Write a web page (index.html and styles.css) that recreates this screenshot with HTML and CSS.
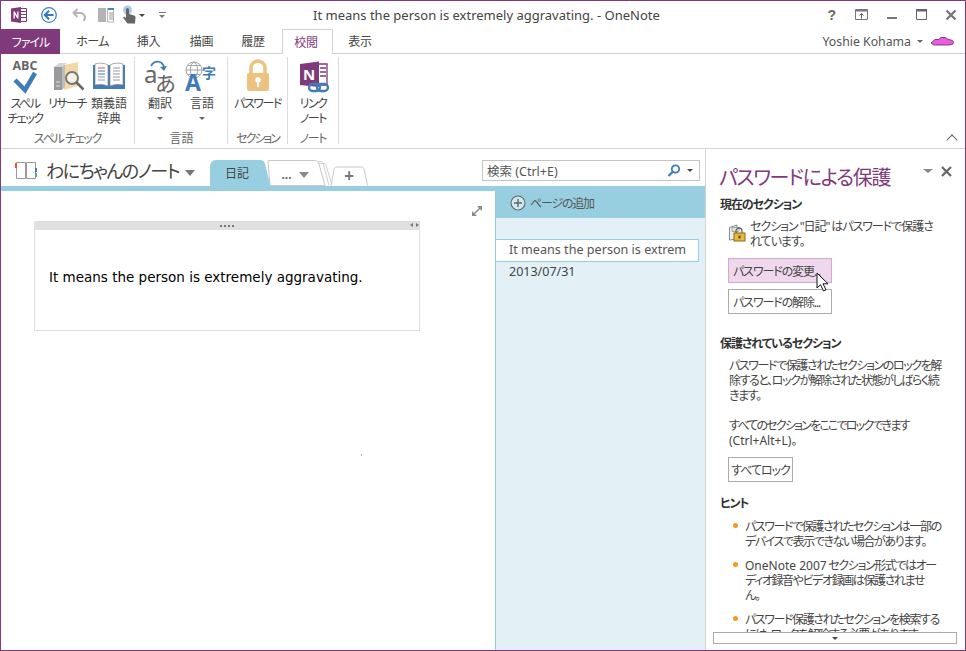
FILE: index.html
```html
<!DOCTYPE html>
<html lang="ja">
<head>
<meta charset="utf-8">
<title>OneNote</title>
<link rel="stylesheet" href="styles.css">
</head>
<body>
<div class="window">
  <header class="titlebar">
    <div class="qat">
      <svg class="qi" width="18" height="18" viewBox="0 0 18 18"><path d="M9 2.500h7.500v13H9z" fill="#fff" stroke="#80397b"/><path d="M11 5.500h5M11 8.500h5M11 11.500h5" stroke="#80397b"/><path d="M1 2.500 11 1v16L1 15.500z" fill="#80397b"/><path d="M3.500 12.500v-7h1.300l2.400 4.300V5.500h1.300v7H7.200L4.800 8.200v4.300z" fill="#fff"/></svg>
      <svg class="qi back" width="18" height="18" viewBox="0 0 18 18"><circle cx="9" cy="9" r="7.300" fill="#fff" stroke="#3f86c6" stroke-width="1.300"/><path d="M9 4.800 4.800 9 9 13.200M5 9h8.500" fill="none" stroke="#2f79c0" stroke-width="2"/></svg>
      <svg class="qi undo" width="18" height="18" viewBox="0 0 18 18"><path d="M6.500 3 2.500 7l4 4" fill="none" stroke="#b5b5b5" stroke-width="2"/><path d="M3 7h6.500a4.500 4.500 0 0 1 3 7.800" fill="none" stroke="#b5b5b5" stroke-width="2"/></svg>
      <svg class="qi read" width="18" height="16" viewBox="0 0 18 16"><path d="M1 1h8v14H1z" fill="#b3b3b3"/><path d="M10.500 1.500h6v13.500h-6z" fill="#fff" stroke="#b3b3b3"/><path d="M11 1h6v2h-6z" fill="#3f86c6"/><path d="M12 6h4M12 8h4M12 10h4M12 12h4" stroke="#999"/></svg>
      <svg class="qi touch" width="18" height="20" viewBox="0 0 18 20"><circle cx="6.500" cy="5" r="4.500" fill="#a9cdea"/><path d="M5 4.500a1.500 1.500 0 0 1 3 0V9l5 1.500c1 .4 1.500 1 1.500 2l-.5 6H6.500L2 12.500l1-1 2 1.500z" fill="#666"/></svg>
      <span class="tri q1"></span>
      <span class="cust"></span>
    </div>
    <div class="doc-title">It means the person is extremely aggravating. - OneNote</div>
    <div class="winbtns">
      <span class="help">?</span>
      <svg width="14" height="12" viewBox="0 0 14 12"><path d="M.5.500h12v10H.500z" fill="none" stroke="#777"/><path d="M1 1h11v1.500H1z" fill="#777"/><path d="M6.500 9.500V5M4.500 6.500l2-2 2 2" fill="none" stroke="#555"/></svg>
      <svg width="12" height="12" viewBox="0 0 12 12"><path d="M1 8h10v2H1z" fill="#777"/></svg>
      <svg width="12" height="12" viewBox="0 0 12 12"><path d="M.5.500h10v10H.500z" fill="none" stroke="#666"/><path d="M0 0h11v2.500H0z" fill="#666"/></svg>
      <svg width="12" height="12" viewBox="0 0 12 12"><path d="M1.500 1.500l9 9M10.500 1.500l-9 9" stroke="#777" stroke-width="2.300"/></svg>
    </div>
  </header>

  <nav class="tabs">
    <a class="tab file">ファイル</a>
    <a class="tab t-home">ホーム</a>
    <a class="tab t-ins">挿入</a>
    <a class="tab t-draw">描画</a>
    <a class="tab t-hist">履歴</a>
    <a class="tab active">校閲</a>
    <a class="tab t-view">表示</a>
    <div class="account">
      <span>Yoshie Kohama</span>
      <span class="tri small"></span>
      <svg width="23" height="10" viewBox="0 0 23 10"><path d="M0 7 4 3.500h4L9.500 1.500h5L17 3.500c3 .2 5.500 1 5.500 3S20 9 17 9H3z" fill="#ee5be3" stroke="#5a2a58" stroke-width=".8"/></svg>
    </div>
  </nav>

  <section class="ribbon">
    <div class="group g1">
      <div class="cmds">
        <div class="cmd">
          <svg class="ic" width="40" height="38" viewBox="0 0 40 38"><text x="20" y="13" class="abc" text-anchor="middle">ABC</text><path d="M10 23l10 10 10-17" fill="none" stroke="#3f7cb8" stroke-width="4.500"/></svg>
          <span>スペル<br>チェック</span>
        </div>
        <div class="cmd">
          <svg class="ic" width="40" height="38" viewBox="0 0 40 38"><path d="M17 8 31 5v24l-14 4z" fill="#f3d9a8"/><path d="M7 10h8v23H7z" fill="#9a9a9a"/><path d="M15 10l3-3v23l-3 3z" fill="#bdbdbd"/><path d="M7 10l5-4h8l-5 4z" fill="#d5d5d5"/><path d="M9 25h4M9 29h4" stroke="#e0e0e0"/><circle cx="25" cy="21" r="6" fill="#f6f1e6" stroke="#777" stroke-width="2"/><path d="M29.500 25.500l7 7" stroke="#666" stroke-width="2.500"/></svg>
          <span>リサーチ</span>
        </div>
        <div class="cmd">
          <svg class="ic" width="40" height="38" viewBox="0 0 40 38"><path d="M4 8h32v24H4z" fill="#3f7cb8"/><path d="M6 7c4-1.500 10-1 13 1v21c-3-1.500-9-2-13-1zM34 7c-4-1.500-10-1-13 1v21c3-1.500 9-2 13-1z" fill="#fff" stroke="#888" stroke-width=".7"/><path d="M9 11h7" stroke="#d9583b"/><path d="M9 14h7M9 17h7" stroke="#3f7cb8"/><path d="M9 20h7M9 23h7M24 11h7M24 14h7M24 17h7M24 20h7M24 23h7" stroke="#999"/></svg>
          <span class="kj">類義語<br>辞典</span>
        </div>
      </div>
      <div class="glabel">スペル チェック</div>
    </div>
    <div class="group g2">
      <div class="cmds">
        <div class="cmd">
          <svg class="ic" width="40" height="38" viewBox="0 0 40 38"><text x="4" y="26" class="glyph-a">a</text><text x="15" y="34" class="glyph-j">あ</text><path d="M11 9c3-6 11-6 13 1" fill="none" stroke="#3f7cb8" stroke-width="1.800"/><path d="M20 10l4 4 3-5z" fill="#3f7cb8"/></svg>
          <span class="kj">翻訳</span>
          <i class="tri cmdtri"></i>
        </div>
        <div class="cmd">
          <svg class="ic" width="40" height="38" viewBox="0 0 40 38"><circle cx="12" cy="13" r="8" fill="none" stroke="#a5a5a5"/><ellipse cx="12" cy="13" rx="3.500" ry="8" fill="none" stroke="#a5a5a5"/><path d="M4 13h16M5.500 8.500h13M5.500 17.500h13" stroke="#a5a5a5"/><text x="3" y="34" class="glyph-A">A</text><text x="20" y="21" class="glyph-k">字</text></svg>
          <span class="kj">言語</span>
          <i class="tri cmdtri"></i>
        </div>
      </div>
      <div class="glabel">言語</div>
    </div>
    <div class="group g3">
      <div class="cmds">
        <div class="cmd wide">
          <svg class="ic" width="40" height="38" viewBox="0 0 40 38"><path d="M13 17v-6a7 7 0 0 1 14 0v6" fill="none" stroke="#ecc27f" stroke-width="3.500"/><rect x="9" y="16" width="22" height="18" rx="2" fill="#ecc27f"/><circle cx="20" cy="23" r="2.800" fill="#fff"/><path d="M19 24h2v6h-2z" fill="#fff"/></svg>
          <span>パスワード</span>
        </div>
      </div>
      <div class="glabel">セクション</div>
    </div>
    <div class="group g4">
      <div class="cmds">
        <div class="cmd wide">
          <svg class="ic" width="40" height="38" viewBox="0 0 40 38"><path d="M20 7h14v21H20z" fill="#fff" stroke="#80397b" stroke-width="1.300"/><path d="M27 11h6M27 15h6M27 19h6" stroke="#80397b" stroke-width="1.300"/><path d="M7 7l19-2.500V30L7 28z" fill="#80397b"/><text x="10" y="23" class="glyph-n">N</text><rect x="16" y="27" width="11" height="7" rx="3.500" fill="none" stroke="#3f7cb8" stroke-width="2.300"/><rect x="24" y="27" width="11" height="7" rx="3.500" fill="none" stroke="#3f7cb8" stroke-width="2.300"/></svg>
          <span>リンク<br>ノート</span>
        </div>
      </div>
      <div class="glabel">ノート</div>
    </div>
    <span class="collapse"></span>
  </section>

  <div class="workspace">
    <div class="content">
      <div class="nbbar">
        <svg class="book" width="24" height="20" viewBox="0 0 24 20"><path d="M2.500 1.500h9v16h-9zM12.500 1.500h9v16h-9z" fill="#fff" stroke="#999"/><path d="M1 2h2v5H1z" fill="#e2572f"/><path d="M21 7h2v4h-2z" fill="#3f7cb8"/><path d="M21 12h2v4h-2z" fill="#5aa58f"/></svg>
        <span class="nbname">わにちゃんのノート</span>
        <span class="tri big"></span>
        <div class="strip">
          <svg class="stripbg" width="170" height="27" viewBox="0 0 170 27"><path d="M119 26.500 113 4c-.500-1-1-1.500-2-1.500h-8" fill="none" stroke="#d0d0d0"/><path d="M122 26.500 116 6c-.500-1-1-1.500-2-1.500h-6" fill="none" stroke="#d0d0d0"/><path d="M60 26.500h55L109 5c-.500-1.500-1.500-3.500-3.500-3.500H58z" fill="#fff" stroke="#c8c8c8"/><path d="M121 26.500l3-16c.3-1.300 1.300-2.500 2.500-2.500h25c1.500 0 2.300 1 2.600 2.500l3.400 16" fill="#fff" stroke="#c8c8c8"/><path d="M0 27V8c0-4 2-7 6-7h44c3 0 4.500 1.500 5 4l5.500 22z" fill="#98cfe0"/></svg>
          <span class="stab s-act">日記</span>
          <span class="stab s-more">...<i class="tri mid"></i></span>
          <span class="stab s-add">+</span>
        </div>
        <div class="search">
          <span>検索 (Ctrl+E)</span>
          <svg width="14" height="14" viewBox="0 0 14 14"><circle cx="8.500" cy="5" r="3.700" fill="none" stroke="#3f7cb8" stroke-width="1.800"/><path d="M6 7.500 1.500 12" stroke="#3f7cb8" stroke-width="2.300"/></svg>
          <i class="tri small dark"></i>
        </div>
      </div>
      <div class="body-row">
        <main class="page">
          <svg class="expand" width="12" height="12" viewBox="0 0 12 12"><path d="M2.500 9.500l7-7" stroke="#8a8a8a" stroke-width="1.500"/><path d="M6 1h5v5zM1 6v5h5z" fill="#8a8a8a"/></svg>
          <article class="note">
            <div class="note-head">
              <span class="grip"></span>
              <span class="arrows"><i class="al"></i><i class="ar"></i></span>
            </div>
            <p>It means the person is extremely aggravating.</p>
          </article>
          <span class="speck"></span>
        </main>
        <aside class="pages">
          <div class="addpage">
            <svg width="16" height="16" viewBox="0 0 16 16"><circle cx="8" cy="8" r="7" fill="#cfe7ef" stroke="#666" stroke-width="1.100"/><path d="M8 4v8M4 8h8" stroke="#666" stroke-width="1.400"/></svg>
            <span>ページの追加</span>
          </div>
          <div class="pageitem">It means the person is extrem</div>
          <div class="pagedate">2013/07/31</div>
        </aside>
      </div>
    </div>

    <aside class="pane">
      <div class="pane-head">
        <h1>パスワードによる保護</h1>
        <span class="tri mid"></span>
        <svg width="11" height="11" viewBox="0 0 11 11"><path d="M1 1l9 9M10 1l-9 9" stroke="#666" stroke-width="2.200"/></svg>
      </div>
      <h2>現在のセクション</h2>
      <div class="locked">
        <svg width="18" height="18" viewBox="0 0 18 18"><path d="M1.500 3.500 9 1v14l-7.500 1z" fill="#f3efe2" stroke="#7a8ea0"/><path d="M4 3.500h7v4H4z" fill="#e8e2c8" stroke="#9aa"/><path d="M8 9V7a3 3 0 0 1 6 0v2" fill="none" stroke="#666" stroke-width="1.300"/><rect x="6" y="9" width="11" height="8" fill="#e9b93a" stroke="#8a6a1a"/><path d="M10.500 11.500h2v3h-2z" fill="#5f4a10"/></svg>
        <p>セクション "日記" はパスワードで保護さ<br>れています。</p>
      </div>
      <div class="btns">
        <button class="btn hot" type="button">パスワードの変更...</button>
        <button class="btn" type="button">パスワードの解除...</button>
      </div>
      <h2 class="mt-prot">保護されているセクション</h2>
      <p class="para">パスワードで保護されたセクションのロックを解<br>除すると、ロックが解除された状態がしばらく続<br>きます。</p>
      <p class="para second">すべてのセクションをここでロックできます<br><span class="lat">(Ctrl+Alt+L)</span>。</p>
      <button class="btn lockall" type="button">すべてロック</button>
      <h2 class="mt-hint">ヒント</h2>
      <ul class="hints">
        <li>パスワードで保護されたセクションは一部の<br>デバイスで表示できない場合があります。</li>
        <li><span class="lat">OneNote 2007</span> セクション形式ではオー<br>ディオ録音やビデオ録画は保護されませ<br>ん。</li>
        <li>パスワード保護されたセクションを検索する<br>には、ロックを解除する必要があります。</li>
      </ul>
      <div class="scrollbtn"><i class="tri small dark"></i></div>
      <svg class="cursor" width="14" height="20" viewBox="0 0 14 20"><path d="M1 1v15l3.500-3.300L7.500 19l2.500-1.200-3-6H12z" fill="#fff" stroke="#111"/></svg>
    </aside>
  </div>
</div>
</body>
</html>
```

FILE: styles.css
```css
* { box-sizing: border-box; }
html, body { margin: 0; height: 100%; }
body {
  width: 966px;
  height: 651px;
  overflow: hidden;
  background: #fff;
  color: #444;
  font-family: "Noto Sans", "Noto Sans CJK JP", sans-serif;
  font-size: 12px;
  font-feature-settings: "palt";
}
.window {
  width: 966px;
  height: 651px;
  border: 1px solid #80397b;
  display: flex;
  flex-direction: column;
  overflow: hidden;
}
.titlebar { height: 28px; display: flex; align-items: center; flex: none; }
.qat { width: 312px; display: flex; align-items: center; flex: none; padding-left: 9px; }
.qi { flex: none; display: block; margin-right: 12px; }
.qi.back { margin-right: 13px; }
.qi.undo { margin-right: 8px; }
.qi.read { margin-right: 6px; }
.qi.touch { margin-right: 0; }
.tri { display: inline-block; width: 0; height: 0; border-style: solid; border-color: #666 transparent transparent; border-width: 4px 4px 0; flex: none; }
.tri.q1 { border-top-color: #444; border-width: 3px 3.500px 0; }
.cust { width: 7px; height: 6px; margin-left: 14px; border-top: 1px solid #777; position: relative; }
.cust::after { content: ""; position: absolute; left: 0; top: 2px; border-style: solid; border-color: #777 transparent transparent; border-width: 3.500px 3.500px 0; }
.doc-title { flex: none; width: 312px; font-size: 13px; color: #444; white-space: nowrap; }
.winbtns { margin-left: auto; display: flex; align-items: center; gap: 17.500px; padding-right: 8px; }
.help { font-weight: 700; font-size: 14px; color: #666; font-family: "Liberation Sans", sans-serif; margin-right: 1px; }

.tabs { height: 25px; display: flex; flex: none; border-bottom: 1px solid #d4d4d4; align-items: stretch; }
.tab { display: flex; align-items: center; justify-content: center; font-size: 12px; letter-spacing: -.2px; color: #444; }
.tab.file { width: 59px; background: #80397b; color: #fff; margin-bottom: -1px; letter-spacing: -1px; }
.t-home { width: 65px; letter-spacing: -.6px; }
.t-ins { width: 47px; }
.t-draw { width: 59px; }
.t-hist { width: 51px; padding-right: 7px; }
.tab.active { width: 51px; color: #80397b; background: #fff; border: 1px solid #d4d4d4; border-bottom: 0; margin-bottom: -1px; padding-right: 3px; }
.t-view { width: 54px; }
.account { margin-left: auto; display: flex; align-items: center; padding-right: 11px; font-size: 12.300px; color: #555; }
.account .tri { margin: 0 8px 0 6px; }

.ribbon { height: 95px; flex: none; display: flex; border-bottom: 1px solid #d4d4d4; padding: 3px 0 0; position: relative; }
.group { display: flex; flex-direction: column; border-right: 1px solid #dcdcdc; height: 87px; }
.g1 { width: 134px; padding-left: 3px; }
.g2 { width: 93px; padding-left: 4px; }
.g3 { width: 60px; }
.g4 { width: 51px; }
.cmds { display: flex; height: 74px; flex: none; }
.cmd { width: 42px; display: flex; flex-direction: column; align-items: center; text-align: center; line-height: 15px; font-size: 12px; letter-spacing: -1.5px; color: #444; white-space: nowrap; }
.cmd.wide { width: 100%; }
.cmd .ic { display: block; margin-bottom: 1px; flex: none; }
.cmd .kj { letter-spacing: 0; }
.cmdtri { margin-top: 6px; border-width: 3px 3.500px 0; }
.glabel { text-align: center; color: #666; font-size: 12px; line-height: 16px; padding-right: 3px; white-space: nowrap; letter-spacing: -1.3px; }
.g2 .glabel { letter-spacing: 0; }
.g3 .glabel { padding-right: 0; letter-spacing: -2px; }
.g4 .glabel { padding-right: 0; }
.abc { font: 700 12.500px "Open Sans", sans-serif; fill: #666; letter-spacing: 0; }
.glyph-a { font: 24px "Noto Sans", sans-serif; fill: #666; }
.glyph-j { font: 21px "Noto Sans CJK JP", sans-serif; fill: #666; }
.glyph-A { font: 700 23px "Noto Sans", sans-serif; fill: #3f7cb8; }
.glyph-k { font: 700 14px "Noto Sans CJK JP", sans-serif; fill: #3f7cb8; }
.glyph-n { font: 700 15px "Noto Sans", sans-serif; fill: #fff; }
.collapse { position: absolute; right: 9px; bottom: 4px; width: 8px; height: 8px; border-left: 1.500px solid #666; border-top: 1.500px solid #666; transform: rotate(45deg); }

.workspace { flex: 1; display: flex; min-height: 0; }
.content { width: 704px; flex: none; display: flex; flex-direction: column; }
.nbbar { height: 37px; flex: none; display: flex; align-items: flex-end; position: relative; }
.book { margin: 0 8px 5px 13px; flex: none; }
.nbname { font-size: 18px; color: #444; line-height: 26px; margin-bottom: 2px; width: 133px; white-space: nowrap; letter-spacing: -1.4px; }
.tri.big { border-width: 6px 5.500px 0; margin: 0 15px 10px 6px; border-top-color: #777; }
.strip { position: relative; width: 170px; height: 27px; display: flex; flex: none; }
.stripbg { position: absolute; left: 0; top: 0; }
.stab { position: relative; display: flex; align-items: center; justify-content: center; }
.s-act { width: 54px; font-size: 12px; padding-top: 1px; }
.s-more { width: 62px; gap: 7px; padding: 4px 12px 0 0; margin-left: 6px; font-size: 12px; color: #666; font-weight: 700; }
.tri.mid { border-width: 6px 5px 0; border-top-color: #888; }
.s-add { width: 34px; margin-left: 0; font-size: 17px; font-weight: 700; color: #777; padding-top: 5px; }
.search { position: absolute; left: 481px; top: 11px; width: 218px; height: 21px; border: 1px solid #c4c4c4; display: flex; align-items: center; padding: 0 6px 0 4px; color: #555; background: #fff; }
.search span { flex: 1; font-size: 12.500px; }
.search svg { margin-right: 6px; }
.tri.small { border-width: 3px 3px 0; }
.tri.dark { border-top-color: #444; }
.body-row { flex: 1; display: flex; border-top: 5px solid #98cfe0; min-height: 0; }
.page { width: 494px; flex: none; position: relative; padding: 30px 0 0 33px; }
.expand { position: absolute; left: 470px; top: 14px; }
.note { width: 386px; height: 110px; border: 1px solid #dedede; border-top: 0; }
.note-head { height: 9px; background: #e0e0e0; margin: 0 -1px; display: flex; align-items: center; justify-content: center; position: relative; }
.grip { width: 14px; height: 2px; background: repeating-linear-gradient(90deg, #777 0 2px, transparent 2px 4px); }
.arrows { position: absolute; right: 1px; top: 2px; display: flex; gap: 3px; }
.arrows i { width: 0; height: 0; border-style: solid; border-color: transparent; border-width: 2.500px 3px; }
.arrows .al { border-right-color: #777; border-left-width: 0; }
.arrows .ar { border-left-color: #777; border-right-width: 0; }
.note p { margin: 39px 0 0 14px; font: 13.500px/16px "DejaVu Sans", sans-serif; color: #000; white-space: nowrap; }
.speck { position: absolute; left: 360px; top: 263px; width: 1px; height: 2px; background: #aaa; }
.pages { flex: 1; background: #e3f1f7; border-left: 1px solid #98cfe0; margin-top: -5px; display: flex; flex-direction: column; }
.addpage { height: 32px; background: #98cfe0; display: flex; align-items: center; gap: 4px; padding: 1px 0 0 14px; color: #555; flex: none; letter-spacing: -1.2px; }
.pageitem { margin-top: 21px; width: 203px; height: 23px; background: #fff; border: 1px solid #98cfe0; border-left: 0; padding-left: 13px; line-height: 20px; font-size: 12.600px; color: #555; white-space: nowrap; overflow: hidden; flex: none; }
.pagedate { padding-left: 13px; line-height: 20px; color: #444; font-size: 12.500px; }

.pane { flex: 1; border-left: 1px solid #d4d4d4; padding: 0 13px 0 14px; position: relative; overflow: hidden; min-width: 0; letter-spacing: -1.4px; }
.lat { letter-spacing: 0; }
.pane-head { height: 47px; display: flex; align-items: center; padding-top: 7px; margin-left: -1px; }
.pane-head h1 { margin: 0; font-size: 20px; font-weight: 400; color: #80397b; white-space: nowrap; flex: 1; letter-spacing: -1.3px; }
.pane-head .tri { margin: 0 8px 10px 0; border-width: 4px 5px 0; }
.pane-head svg { flex: none; margin-bottom: 10px; }
h2 { margin: 0; font-size: 12px; font-weight: 700; color: #333; line-height: 18px; letter-spacing: -1.1px; }
.locked { display: flex; gap: 4px; padding-left: 8px; margin-top: 5px; letter-spacing: -1.05px; }
.locked svg { flex: none; margin-top: 5px; }
.locked p { margin: 0; line-height: 15px; white-space: nowrap; }
.btns { display: flex; flex-direction: column; gap: 6px; align-items: flex-start; margin: 9px 0 0 8px; }
.btn { display: block; width: 104px; height: 25px; padding: 0 0 0 4px; text-align: left; background: #fff; border: 1px solid #ababab; font: inherit; letter-spacing: -1.1px; color: #444; white-space: nowrap; font-feature-settings: "palt"; }
.btn.hot { background: #f0d8ec; border-color: #d3a8cd; }
.mt-prot { margin-top: 21px; }
.para { margin: 5px 0 0 9px; line-height: 15px; white-space: nowrap; }
.para.second { margin-top: 15px; letter-spacing: -1.8px; }
.lockall { width: 65px; margin: 9px 0 0 8px; text-align: center; padding: 0; letter-spacing: -1px; }
.mt-hint { margin-top: 13px; }
.hints { list-style: none; margin: 6px 0 0; padding: 0 0 0 25px; }
.hints li { position: relative; line-height: 15px; margin-bottom: 9px; white-space: nowrap; }
.hints li::before { content: ""; position: absolute; left: -12px; top: 4px; width: 5px; height: 5px; border-radius: 50%; background: #f39a1f; }
.scrollbtn { position: absolute; left: 7px; top: 483px; width: 244px; height: 12px; background: #fff; border: 1px solid #ababab; display: flex; align-items: center; justify-content: center; box-shadow: 0 12px 0 9px #fff; }
.cursor { position: absolute; left: 110px; top: 123px; }
```
